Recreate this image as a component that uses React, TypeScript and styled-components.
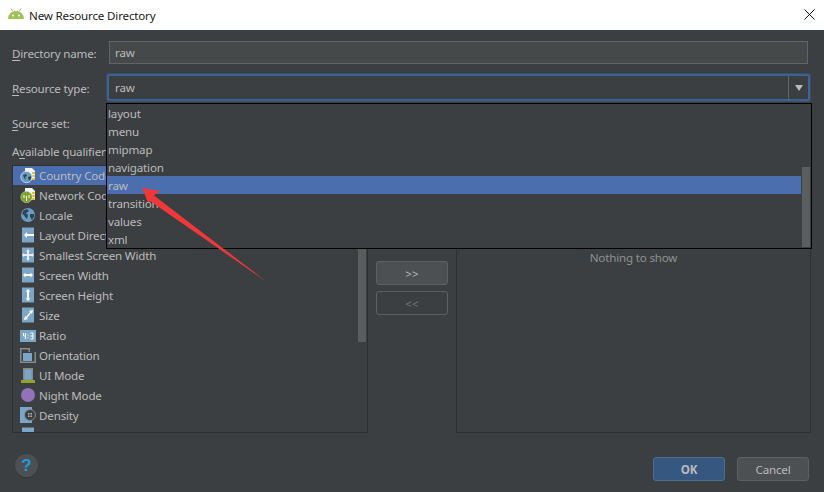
import React from "react";
import styled, { createGlobalStyle } from "styled-components";

const Global = createGlobalStyle`
  html, body { margin: 0; padding: 0; background: #3c3f41; }
  body { font-family: "Noto Sans", "Open Sans", sans-serif; font-size: 11.6px; letter-spacing: -0.18px; color: #bbbbbb; }
  * { box-sizing: border-box; }
`;

const Win = styled.div`
  width: 824px; height: 492px; overflow: hidden; display: flex; flex-direction: column; background: #3c3f41;
`;
const TitleBar = styled.header`
  height: 30px; flex: none; background: #fff; display: flex; align-items: center; padding: 0 9px 0 8px;
  color: #1a1a1a;
`;
const AppLogo = styled.svg` margin-top: -3px; `;
const CloseIcon = styled.svg` margin-top: -2px; `;
const TitleText = styled.span` margin-left: 5px; flex: 1; `;
const Body = styled.main`
  position: relative; flex: 1; padding: 11px 13px 0 12px; display: flex; flex-direction: column;
`;
const FieldRow = styled.div`
  display: grid; grid-template-columns: 97px 1fr; align-items: center; height: 23px; margin: 0 3px 12px 0;
`;
const Label = styled.label` white-space: nowrap; padding-top: 2px; `;
const Key = styled.span` text-decoration: underline; text-underline-offset: 2px; text-decoration-thickness: 1px; `;
const TextBox = styled.div`
  height: 23px; background: #45494a; border: 1px solid #646464; padding-left: 5px; line-height: 21px; color: #bbb;
`;
const Combo = styled.div`
  height: 23px; background: #3c3f41; border-radius: 1px; box-shadow: 0 0 0 2px #3f6292, 0 0 0 3px #3d4d60;
  display: flex; align-items: center; padding-left: 6px;
`;
const ComboValue = styled.span` flex: 1; `;
const ComboArrow = styled.div`
  width: 20px; height: 23px; border-left: 1px solid #646464; display: flex; align-items: center; justify-content: center;
  &::after { content: ""; border-left: 4px solid transparent; border-right: 4px solid transparent; border-top: 6px solid #bbbbbb; }
`;
const QualifierLabel = styled.div` height: 18px; line-height: 18px; margin: -3px 0 4px; `;
const Columns = styled.div`
  display: grid; grid-template-columns: 356px 72px 355px; column-gap: 8px; height: 268px;
`;
const QualifierList = styled.ul`
  position: relative; margin: 0; padding: 0; list-style: none; border: 1px solid #2f2f2f; height: 268px; overflow: hidden;
`;
const Row = styled.li<{ $active?: boolean }>`
  height: 20px; display: flex; align-items: center; padding-left: 7px; gap: 3px; white-space: nowrap;
  background: ${(p) => (p.$active ? "#4b6eaf" : "transparent")};
  & > svg { flex: none; }
  &:first-child { margin-top: -1px; }
`;
const ListThumb = styled.div`
  position: absolute; right: 1px; top: 0; width: 8px; height: 176px; background: #5a5d5e;
`;
const Transfer = styled.div` display: flex; flex-direction: column; gap: 6px; padding-top: 96px; `;
const MoveBtn = styled.button<{ $off?: boolean }>`
  width: 72px; height: 24px; border-radius: 3px; padding: 0; font: 11.6px "Noto Sans", sans-serif;
  border: 1px solid #5e6060; background: ${(p) => (p.$off ? "transparent" : "#4c5052")}; color: ${(p) => (p.$off ? "#777" : "#bbb")};
`;
const ChosenPanel = styled.div`
  border: 1px solid #2f2f2f; text-align: center; padding-top: 84px; color: #8f9192;
`;
const Footer = styled.footer`
  margin: 24px 2px 0 0; height: 24px; display: flex; align-items: center; gap: 12px;
`;
const HelpBtn = styled.div`
  width: 23px; height: 23px; margin: -7px auto 0 3px; border-radius: 50%; background: #4c5052; box-shadow: 0 1px 0 #333537;
  color: #1e9ae0; font: bold 17px/23px "Liberation Sans", sans-serif; text-align: center; letter-spacing: 0;
`;
const DialogBtn = styled.button<{ $primary?: boolean }>`
  width: 72px; height: 24px; border-radius: 3px; padding: 0; font: ${(p) => (p.$primary ? "bold" : "normal")} 11.6px "Noto Sans", sans-serif; color: #bbb;
  letter-spacing: -0.18px;
  border: 1px solid ${(p) => (p.$primary ? "#4c708c" : "#5e6060")}; background: ${(p) => (p.$primary ? "#365880" : "#4c5052")};
`;
const Popup = styled.ul`
  position: absolute; left: 106px; top: 73px; width: 706px; height: 146px; margin: 0; padding: 0 10px 0 0; list-style: none;
  background: #3c3f41; border: 1px solid #000;
`;
const PopupItem = styled.li<{ $active?: boolean }>`
  height: 18px; padding: 2px 0 0 1px; line-height: 16px; background: ${(p) => (p.$active ? "#4b6eaf" : "transparent")};
`;
const PopupThumb = styled.div`
  position: absolute; right: 1px; top: 63px; width: 8px; height: 80px; background: #5a5e5e;
`;
const Arrow = styled.svg` position: absolute; left: 0; top: -30px; pointer-events: none; `;

const Blue = "#7ba6c8";
const Ic = ({ children }: { children: React.ReactNode }) => (
  <svg width="16" height="16" viewBox="0 0 16 16">{children}</svg>
);
const Card = () => (
  <>
    <path d="M5 1h7l3 3v9H5z" fill="#f4f4f4" />
    <path d="M12 5h3v2h-3zM12 8h3v2h-3zM12 11h3v2h-3z" fill="#e5bd3f" />
  </>
);
const Square = ({ children }: { children: React.ReactNode }) => (
  <Ic>
    <rect x="2" y="0.5" width="12" height="15" fill={Blue} />
    {children}
  </Ic>
);

const icons: Record<string, React.ReactNode> = {
  country: <Ic><Card /><circle cx="6.5" cy="10" r="5.7" fill="#6b9dc4" stroke="#fff" strokeWidth="0.6" /><path d="M3 8l3-1 1 2-2 1 1 3-2-2zM8 10l3-1 0 3-2 2z" fill="#2f4552" /></Ic>,
  network: <Ic><Card /><circle cx="6.5" cy="10" r="5.7" fill="#7fa329" stroke="#dfe8c0" strokeWidth="0.5" /><path d="M6 9h1v5H6z" fill="#fff" /><path d="M4 8v3M9 8v3" stroke="#fff" fill="none" /></Ic>,
  locale: <Ic><circle cx="8" cy="8" r="7" fill="#6b9dc4" /><path d="M3.500 3.500l3.500-1.500 2 2-3 2 2 2-1 4-2-2-1-2-2-1zM10 7l4 0 .5 2-2.500 4-2-3z" fill="#2f4552" /></Ic>,
  direction: <Square><path d="M4 8l3-3v2h7v2H7v2z" fill="#fff" /></Square>,
  smallest: <Square><path d="M8 2l2 2.500H9V7h3V6l2 2-2 2V9H9v2.500h1L8 14l-2-2.500h1V9H4v1L2 8l2-2v1h3V4.500H6z" fill="#e8eef4" /></Square>,
  width: <Square><path d="M3 8l2.500-2.500V7h5V5.500L13 8l-2.500 2.500V9h-5v1.500z" fill="#fff" /></Square>,
  height: <Square><path d="M8 2l2.500 2.500H9v7h1.500L8 14l-2.500-2.500H7v-7H5.500z" fill="#fff" /></Square>,
  size: <Square><path d="M4 13l1-4 1 1 4-5-1-1 4-1-1 4-1-1-4 5 1 1z" fill="#fff" /></Square>,
  ratio: <Ic><rect x="0" y="3" width="16" height="12" fill={Blue} /><path d="M3.500 6v3h2.500M5.500 6v6M8 7.500v1M8 10v1M10.500 6h2.500v6h-2.500M10.500 9h2.500" stroke="#fff" fill="none" /></Ic>,
  orientation: <Ic><path d="M0 1h10v4h6v11H0z" fill="#87898a" /><rect x="1.500" y="2.500" width="7" height="2.500" fill="#3c3f41" /><rect x="1.500" y="5" width="13" height="9.500" fill="#3c3f41" /><rect x="3" y="6" width="9" height="8" fill={Blue} /></Ic>,
  ui: <Ic><rect x="3" y="1" width="10" height="12" fill="#87898a" /><rect x="4.500" y="2.500" width="7" height="10" fill={Blue} /><rect x="1" y="13" width="14" height="3" fill="#8fa326" /></Ic>,
  night: <Ic><circle cx="8" cy="8" r="7" fill="#9274b6" /><path d="M12.500 3.500a5.500 5.500 0 0 1-7 9.500 5 5 0 0 0 7-9.500z" fill="#2d2b33" /></Ic>,
  density: <Ic><rect x="0" y="0" width="12" height="16" fill={Blue} /><circle cx="10" cy="8" r="5.500" fill="#3c3f41" stroke="#8a8c8d" /><path d="M8 6h1.500v1.500H8zM10.500 6H12v1.500h-1.500zM8 8.500h1.500V10H8zM10.500 8.500H12V10h-1.500z" fill="#bbb" /></Ic>,
  touch: <Square><circle cx="8" cy="7" r="2" fill="#3c3f41" /></Square>,
};

const qualifiers: [string, string][] = [
  ["country", "Country Code"], ["network", "Network Code"], ["locale", "Locale"], ["direction", "Layout Direction"],
  ["smallest", "Smallest Screen Width"], ["width", "Screen Width"], ["height", "Screen Height"], ["size", "Size"],
  ["ratio", "Ratio"], ["orientation", "Orientation"], ["ui", "UI Mode"], ["night", "Night Mode"], ["density", "Density"], ["touch", "Touch Screen"],
];
const types = ["layout", "menu", "mipmap", "navigation", "raw", "transition", "values", "xml"];

export default function App() {
  return (
    <Win>
      <Global />
      <TitleBar>
        <AppLogo width="16" height="11" viewBox="0 0 16 11">
          <path d="M0 11a8 8 0 0 1 16 0z" fill="#9fc25a" />
          <path d="M3 0.500l2 3M13 0.500l-2 3" stroke="#9fc25a" />
          <circle cx="5" cy="7.500" r="0.900" fill="#fff" />
          <circle cx="11" cy="7.500" r="0.900" fill="#fff" />
        </AppLogo>
        <TitleText>New Resource Directory</TitleText>
        <CloseIcon width="11" height="11" viewBox="0 0 11 11"><path d="M0.500 0.500l10 10M10.500 0.500l-10 10" stroke="#111" fill="none" /></CloseIcon>
      </TitleBar>
      <Body>
        <FieldRow>
          <Label><Key>D</Key>irectory name:</Label>
          <TextBox>raw</TextBox>
        </FieldRow>
        <FieldRow>
          <Label><Key>R</Key>esource type:</Label>
          <Combo><ComboValue>raw</ComboValue><ComboArrow /></Combo>
        </FieldRow>
        <FieldRow>
          <Label><Key>S</Key>ource set:</Label>
        </FieldRow>
        <QualifierLabel>A<Key>v</Key>ailable qualifiers:</QualifierLabel>
        <Columns>
          <QualifierList>
            {qualifiers.map(([k, t], i) => (
              <Row key={k} $active={i === 0}>{icons[k]}<span>{t}</span></Row>
            ))}
            <ListThumb />
          </QualifierList>
          <Transfer>
            <MoveBtn>&gt;&gt;</MoveBtn>
            <MoveBtn $off>&lt;&lt;</MoveBtn>
          </Transfer>
          <ChosenPanel>Nothing to show</ChosenPanel>
        </Columns>
        <Footer>
          <HelpBtn>?</HelpBtn>
          <DialogBtn $primary>OK</DialogBtn>
          <DialogBtn>Cancel</DialogBtn>
        </Footer>
        <Popup>
          {types.map((t) => (
            <PopupItem key={t} $active={t === "raw"}>{t}</PopupItem>
          ))}
          <PopupThumb />
        </Popup>
        <Arrow width="824" height="492" viewBox="0 0 824 492">
          <path d="M142 188L160 191L154 195.500L267 282L150 201L148 202.500z" fill="#f0383a" />
        </Arrow>
      </Body>
    </Win>
  );
}
